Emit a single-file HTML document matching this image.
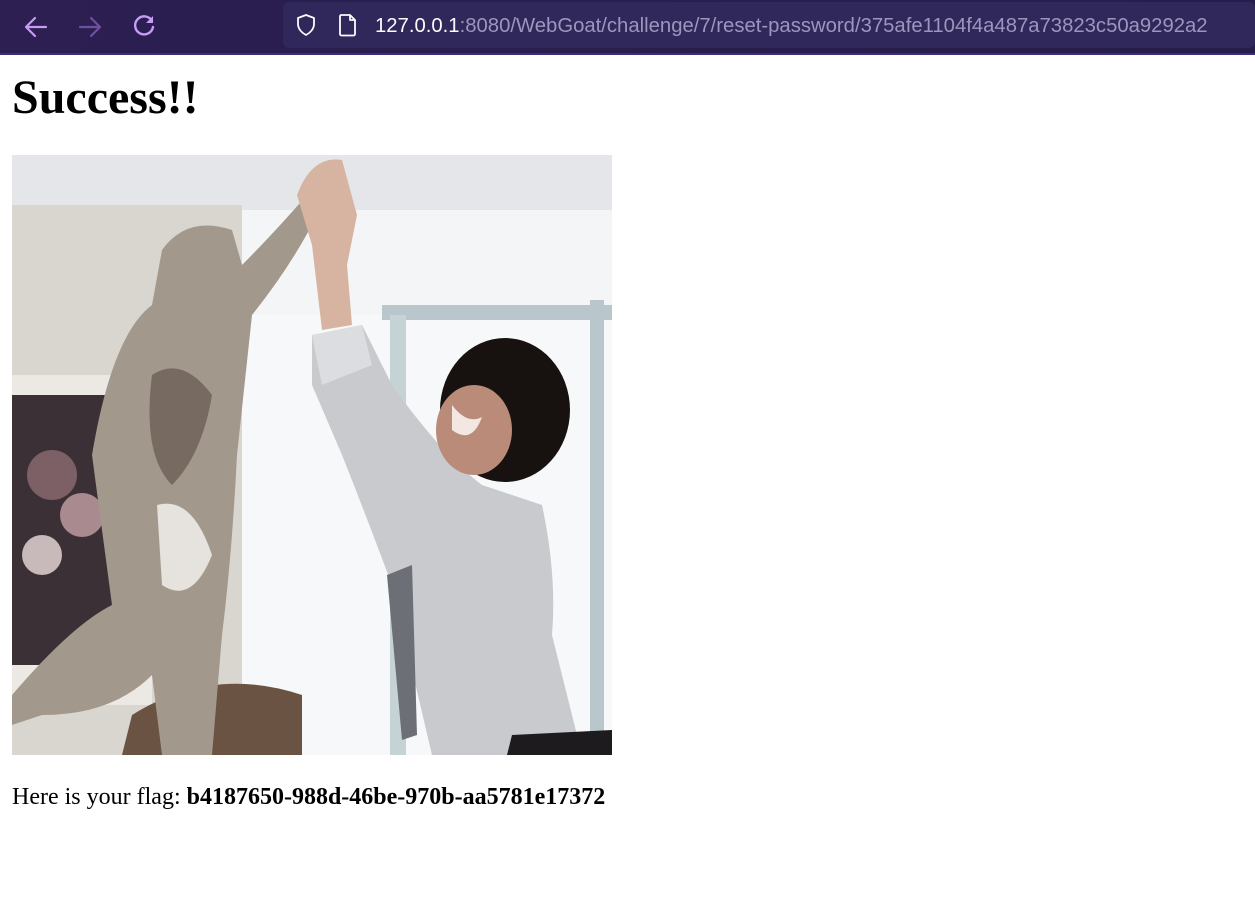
<!DOCTYPE html>
<html><head><meta charset="utf-8"><style>
*{margin:0;padding:0;box-sizing:border-box}
html,body{width:1255px;height:910px;overflow:hidden;background:#fff}
.bar{position:absolute;left:0;top:0;width:1255px;height:55px;background:linear-gradient(90deg,#2e1f52 0%,#2a1e50 15%,#271d4c 100%);border-bottom:2px solid #3c2d78}
.url{position:absolute;left:283px;top:2px;width:972px;height:46px;background:#30285a;border-radius:6px}
.urltext{position:absolute;left:375px;top:15px;font:20.3px "Liberation Sans",sans-serif;color:#9d95bd;white-space:nowrap}
.urltext b{font-weight:normal;color:#fbfbfe}
h1{position:absolute;left:12px;top:74px;font:bold 48px/1 "Liberation Serif",serif;color:#000}
.pic{position:absolute;left:12px;top:155px;width:600px;height:600px}
p{position:absolute;left:12px;top:785px;font:24px/1 "Liberation Serif",serif;color:#000;white-space:nowrap}
</style></head><body>
<div class="bar">
<svg style="position:absolute;left:22px;top:13px" width="28" height="28" viewBox="0 0 28 28"><path d="M24 14H5M13 5l-9 9 9 9" stroke="#c79cf5" stroke-width="2.2" fill="none" stroke-linecap="round" stroke-linejoin="round"/></svg>
<svg style="position:absolute;left:76px;top:13px" width="28" height="28" viewBox="0 0 28 28"><path d="M4 14h19M15 5l9 9-9 9" stroke="#6f4fa0" stroke-width="2.2" fill="none" stroke-linecap="round" stroke-linejoin="round"/></svg>
<svg style="position:absolute;left:130px;top:12px" width="28" height="28" viewBox="0 0 28 28"><path d="M22 9A9 9 0 1 0 23 15" stroke="#c79cf5" stroke-width="2.4" fill="none" stroke-linecap="round"/><path d="M23 4v7h-7z" fill="#c79cf5"/></svg>
<div class="url"></div>
<svg style="position:absolute;left:293px;top:12px" width="26" height="26" viewBox="0 0 26 26"><path d="M13 3l8 3v6c0 5-4 9-8 11-4-2-8-6-8-11V6z" stroke="#fbfbfe" stroke-width="1.8" fill="none" stroke-linejoin="round"/></svg>
<svg style="position:absolute;left:337px;top:12px" width="22" height="26" viewBox="0 0 22 26"><path d="M4 3h9l5 5v14a1.5 1.5 0 0 1-1.5 1.5h-12A1.5 1.5 0 0 1 3 22V4.5A1.5 1.5 0 0 1 4 3zM13 3v5h5" stroke="#fbfbfe" stroke-width="1.8" fill="none" stroke-linejoin="round"/></svg>
<div class="urltext"><b>127.0.0.1</b>:8080/WebGoat/challenge/7/reset-password/375afe1104f4a487a73823c50a9292a2</div>
</div>
<h1>Success!!</h1>
<svg class="pic" viewBox="0 0 600 600">
<rect width="600" height="600" fill="#f3f5f7"/>
<rect width="600" height="55" fill="#e4e6e9"/>
<rect x="0" y="50" width="230" height="550" fill="#d9d6d0"/>
<rect x="230" y="160" width="370" height="440" fill="#f6f8fa"/>
<rect x="370" y="150" width="230" height="15" fill="#b9c7cc"/>
<rect x="378" y="160" width="16" height="440" fill="#c5d2d6"/>
<rect x="578" y="145" width="14" height="455" fill="#b9c7cc"/>
<rect x="0" y="220" width="140" height="330" fill="#ece9e4"/>
<rect x="0" y="240" width="118" height="270" fill="#3b3036"/>
<circle cx="40" cy="320" r="25" fill="#7d5f66"/><circle cx="70" cy="360" r="22" fill="#a88a8f"/><circle cx="30" cy="400" r="20" fill="#c8b9bb"/>
<path d="M110 600 L120 560 Q200 510 290 540 L290 600Z" fill="#6b5343"/>
<path d="M0 540 Q60 470 100 450 L80 300 Q100 180 140 150 L150 95 Q175 60 220 75 L230 110 Q260 80 295 40 L305 60 Q280 110 240 160 L225 300 Q220 400 210 480 L200 600 L150 600 L140 520 Q100 560 30 560 L0 570Z" fill="#a3988c"/>
<path d="M140 220 Q170 200 200 240 Q190 300 160 330 Q130 300 140 220Z" fill="#776a60"/>
<path d="M145 350 Q180 340 200 400 Q180 450 150 430Z" fill="#e6e2de"/>
<path d="M285 40 Q300 0 330 5 L345 60 L335 110 L340 170 L310 175 L300 90Z" fill="#d7b4a2"/>
<path d="M300 180 L350 170 L380 230 Q430 300 470 330 L530 350 Q545 420 540 480 L570 600 L420 600 L380 430 Q350 350 330 300 L300 230Z" fill="#c9cacd"/>
<path d="M300 180 L350 170 L360 210 L310 230Z" fill="#dcdde0"/>
<path d="M375 420 L400 410 L405 580 L390 585Z" fill="#6d6f76"/>
<ellipse cx="493" cy="255" rx="65" ry="72" fill="#17120f"/>
<ellipse cx="462" cy="275" rx="38" ry="45" fill="#b98b78"/>
<path d="M440 250 Q455 270 470 262 Q460 290 440 275Z" fill="#f3e7e1"/>
<path d="M500 580 L600 575 L600 600 L495 600Z" fill="#1d1b1d"/>
</svg>
<p>Here is your flag: <b>b4187650-988d-46be-970b-aa5781e17372</b></p>
</body></html>
